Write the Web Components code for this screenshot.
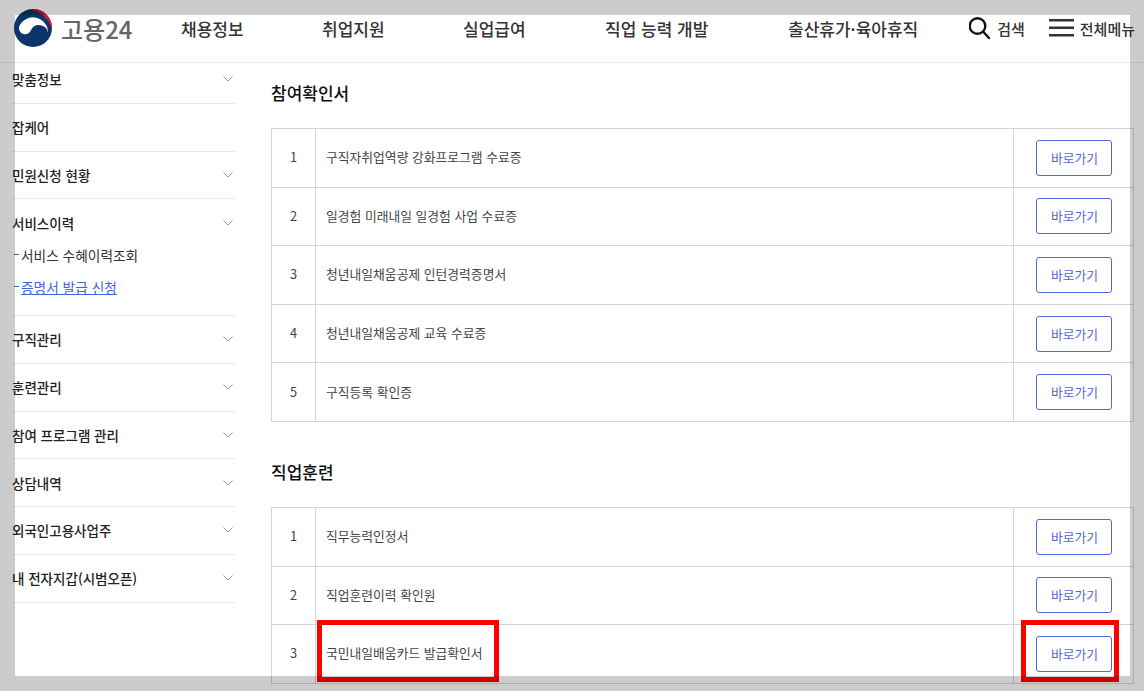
<!DOCTYPE html>
<html lang="ko">
<head>
<meta charset="utf-8">
<title>고용24</title>
<style>
    html, body { margin: 0; height: 691px; overflow: hidden; background: #fff; }
    body { font-family: "Noto Sans CJK KR", "Noto Sans", sans-serif; color: #222; }
    .page { display: grid; grid-template-columns: 223px 1fr; column-gap: 36px; padding: 0 10px 0 12px; }
</style>
</head>
<body>
<site-header></site-header>
<div class="page">
    <side-nav>
        <side-item label="맞춤정보" arrow></side-item>
        <side-item label="잡케어"></side-item>
        <side-item label="민원신청 현황" arrow></side-item>
        <side-item label="서비스이력" arrow>
            <sub-link>서비스 수혜이력조회</sub-link>
            <sub-link active>증명서 발급 신청</sub-link>
        </side-item>
        <side-item label="구직관리" arrow></side-item>
        <side-item label="훈련관리" arrow></side-item>
        <side-item label="참여 프로그램 관리" arrow></side-item>
        <side-item label="상담내역" arrow></side-item>
        <side-item label="외국인고용사업주" arrow></side-item>
        <side-item label="내 전자지갑(시범오픈)" arrow></side-item>
    </side-nav>
    <main>
        <cert-section title="참여확인서">
            <cert-row num="1">구직자취업역량 강화프로그램 수료증</cert-row>
            <cert-row num="2">일경험 미래내일 일경험 사업 수료증</cert-row>
            <cert-row num="3">청년내일채움공제 인턴경력증명서</cert-row>
            <cert-row num="4">청년내일채움공제 교육 수료증</cert-row>
            <cert-row num="5">구직등록 확인증</cert-row>
        </cert-section>
        <cert-section title="직업훈련">
            <cert-row num="1">직무능력인정서</cert-row>
            <cert-row num="2">직업훈련이력 확인원</cert-row>
            <cert-row num="3" marked>국민내일배움카드 발급확인서</cert-row>
        </cert-section>
    </main>
</div>
<capture-shade></capture-shade>

<script>
class SiteHeader extends HTMLElement {
    constructor() {
        super();
        const shadow = this.attachShadow({ mode: "open" });
        shadow.innerHTML = `
            <style>
                :host { display: flex; align-items: center; height: 56px; padding-bottom: 6px; border-bottom: 1px solid #eaeaea; position: relative; }
                .logo { display: flex; align-items: center; gap: 9px; width: 181px; padding-left: 14px; box-sizing: border-box; flex: none; }
                .logo svg { display: block; }
                .logo span { font-size: 24px; font-weight: 500; color: #666; }
                nav { display: flex; font-size: 17px; font-weight: 500; color: #333; flex: none; }
                nav a { white-space: nowrap; }
                nav a:nth-child(1) { width: 141px; }
                nav a:nth-child(2) { width: 141px; }
                nav a:nth-child(3) { width: 142px; }
                nav a:nth-child(4) { width: 183px; }
                .tools { display: flex; align-items: center; margin-left: auto; padding-right: 9px; font-size: 15px; font-weight: 500; color: #333; }
                .tools div { display: flex; align-items: center; gap: 6px; }
                .tools div + div { margin-left: 24px; }
            </style>
            <div class="logo">
                <svg width="38" height="38" viewBox="0 0 38 38">
                    <circle cx="19" cy="19" r="19" fill="#0c3468"/>
                    <path d="M5 18A15 15 0 0 1 34 24A9 9 0 0 0 17 21A6.200 6.200 0 0 1 5 18Z" fill="#fff"/>
                    <path d="M16 .2A19 19 0 0 1 37.800 22A26 26 0 0 0 16 .2Z" fill="#d6153a"/>
                </svg>
                <span>고용24</span>
            </div>
            <nav>
                <a>채용정보</a><a>취업지원</a><a>실업급여</a><a>직업 능력 개발</a><a>출산휴가·육아휴직</a>
            </nav>
            <div class="tools">
                <div>
                    <svg width="22" height="24" viewBox="0 0 22 24" fill="none" stroke="#111" stroke-width="2.400" stroke-linecap="round"><circle cx="8.500" cy="10" r="7.800"/><path d="M14.500 16l5.500 6"/></svg>
                    <span>검색</span>
                </div>
                <div>
                    <svg width="25" height="20" viewBox="0 0 25 20" fill="#333"><rect y="1" width="25" height="2.500"/><rect y="8.500" width="25" height="2.500"/><rect y="16" width="25" height="2.500"/></svg>
                    <span>전체메뉴</span>
                </div>
            </div>`;
    }
}

class SideNav extends HTMLElement {
    constructor() {
        super();
        const shadow = this.attachShadow({ mode: "open" });
        shadow.innerHTML = `
            <style>:host { display: block; margin-top: -7px; }</style>
            <slot></slot>`;
    }
}

class SideItem extends HTMLElement {
    constructor() {
        super();
        const shadow = this.attachShadow({ mode: "open" });
        const arrow = this.hasAttribute("arrow")
            ? `<svg width="10" height="6" viewBox="0 0 10 6" fill="none" stroke="#999" stroke-width="1"><path d="M.5.5L5 5l4.500-4.500"/></svg>`
            : "";
        shadow.innerHTML = `
            <style>
                :host { display: block; border-bottom: 1px solid #eaeaea; }
                .head { display: flex; align-items: center; justify-content: space-between; height: 46.4px; padding: 0 2px .4px 0; font-size: 13.5px; font-weight: 500; color: #222; }
                .subs { margin-top: -7.6px; padding-bottom: 12.6px; }
                .subs:not(.has) { display: none; }
            </style>
            <div class="head"><span>${this.getAttribute("label")}</span>${arrow}</div>
            <div class="subs ${this.children.length ? "has" : ""}"><slot></slot></div>`;
    }
}

class SubLink extends HTMLElement {
    constructor() {
        super();
        const shadow = this.attachShadow({ mode: "open" });
        shadow.innerHTML = `
            <style>
                :host { display: flex; align-items: center; height: 32px; font-size: 13.7px; color: #333; }
                :host([active]) { color: #3f66e0; }
                :host([active]) .text { text-decoration: underline; }
                .dash { width: 5px; height: 1px; margin: 0 2px 0 2px; background: #666; }
                :host([active]) .dash { background: #3f66e0; }
            </style>
            <span class="dash"></span><span class="text"><slot></slot></span>`;
    }
}

class CertSection extends HTMLElement {
    constructor() {
        super();
        const shadow = this.attachShadow({ mode: "open" });
        shadow.innerHTML = `
            <style>
                :host { display: block; padding-bottom: 20px; }
                h2 { margin: 0; height: 65px; line-height: 59px; font-size: 17px; font-weight: 500; color: #111; }
                .table { border: 1px solid #d5d5d5; border-bottom: 0; }
            </style>
            <h2>${this.getAttribute("title")}</h2>
            <div class="table"><slot></slot></div>`;
    }
}

class CertRow extends HTMLElement {
    constructor() {
        super();
        const shadow = this.attachShadow({ mode: "open" });
        shadow.innerHTML = `
            <style>
                :host { display: grid; grid-template-columns: 44px 1fr 120px; height: 58.6px; box-sizing: border-box; border-bottom: 1px solid #d5d5d5; font-size: 12.8px; color: #444; position: relative; }
                .num, .name, .action { display: flex; align-items: center; }
                .num { justify-content: center; border-right: 1px solid #d5d5d5; padding-bottom: 2px; }
                .name { padding: 0 0 2px 10px; }
                .action { justify-content: center; border-left: 1px solid #d5d5d5; }
                button { width: 76px; height: 36px; padding: 0 0 1px 2px; font: inherit; color: #5468d8; background: #fff; border: 1px solid #4f67d8; border-radius: 3px; }
                .mark { position: absolute; border: 5px solid #f00; box-sizing: border-box; }
                .mark.text { left: 45px; top: -5px; width: 182px; height: 62px; }
                .mark.btn { right: 14px; top: -5px; width: 98px; height: 62px; }
            </style>
            <div class="num">${this.getAttribute("num")}</div>
            <div class="name"><slot></slot></div>
            <div class="action"><button type="button">바로가기</button></div>
            ${this.hasAttribute("marked") ? `<div class="mark text"></div><div class="mark btn"></div>` : ""}`;
    }
}

class CaptureShade extends HTMLElement {
    constructor() {
        super();
        const shadow = this.attachShadow({ mode: "open" });
        shadow.innerHTML = `
            <style>
                :host { position: absolute; left: 15px; top: 15px; width: 1115px; height: 661px; box-shadow: 0 0 0 1200px rgba(0, 0, 0, .2); pointer-events: none; }
            </style>`;
    }
}

customElements.define("site-header", SiteHeader);
customElements.define("side-nav", SideNav);
customElements.define("side-item", SideItem);
customElements.define("sub-link", SubLink);
customElements.define("cert-section", CertSection);
customElements.define("cert-row", CertRow);
customElements.define("capture-shade", CaptureShade);
</script>
</body>
</html>
